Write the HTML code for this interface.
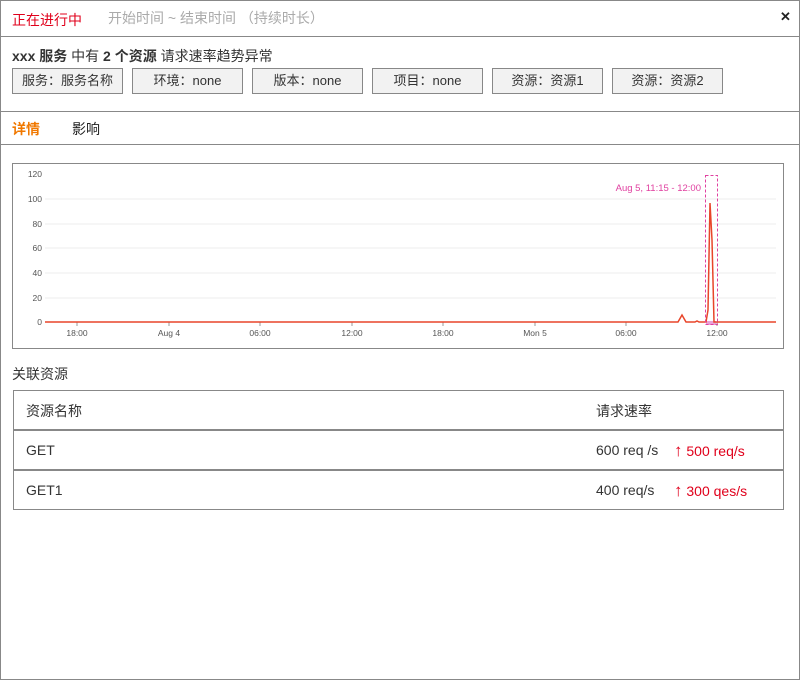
<!DOCTYPE html>
<html><head><meta charset="utf-8"><style>
*{margin:0;padding:0;box-sizing:border-box}
body{width:800px;height:680px;background:#fff;font-family:"Liberation Sans","Noto Sans CJK SC",sans-serif;font-size:14px;color:#333;position:relative;overflow:hidden}
.frame{position:absolute;left:0;top:0;width:800px;height:680px;border:1px solid #888}
.abs{position:absolute;white-space:nowrap}
.hl{position:absolute;left:0;width:800px;height:1px;background:#888}
.tag{position:absolute;top:68px;height:26px;width:111px;border:1px solid #888;background:#f2f2f2;text-align:center;line-height:24px;font-size:13px;color:#333}
.tbl{position:absolute;left:13px;top:390px;width:771px;height:120px;border:1px solid #888}
.sep{position:absolute;left:0;width:769px;height:2px;background:#888}
</style></head><body>
<div class="frame"></div>
<div class="abs" style="left:12px;top:10px;color:#e0001b;font-size:14px">正在进行中</div>
<div class="abs" style="left:108px;top:8px;color:#aaa;font-size:14px">开始时间 ~ 结束时间 （持续时长）</div>
<div class="abs" style="left:780px;top:9px;font-size:13px;font-weight:bold;color:#222">✕</div>
<div class="hl" style="top:36px"></div>
<div class="abs" style="left:12px;top:46px;font-size:14px;color:#333"><b>xxx 服务</b> 中有 <b>2 个资源</b> 请求速率趋势异常</div>
<div class="tag" style="left:12px">服务：服务名称</div>
<div class="tag" style="left:132px">环境：none</div>
<div class="tag" style="left:252px">版本：none</div>
<div class="tag" style="left:372px">项目：none</div>
<div class="tag" style="left:492px">资源：资源1</div>
<div class="tag" style="left:612px">资源：资源2</div>
<div class="hl" style="top:111px"></div>
<div class="abs" style="left:12px;top:119px;color:#f07800;font-weight:bold;font-size:14px">详情</div>
<div class="abs" style="left:72px;top:119px;color:#222;font-size:14px">影响</div>
<div class="hl" style="top:144px"></div>
<svg class="abs" style="left:12px;top:163px" width="772" height="186" viewBox="12 163 772 186">
<rect x="12.5" y="163.5" width="771" height="185" fill="#fff" stroke="#888"/>
<g stroke="#eee" stroke-width="1">
<line x1="45" y1="199" x2="776" y2="199"/><line x1="45" y1="224" x2="776" y2="224"/><line x1="45" y1="248" x2="776" y2="248"/><line x1="45" y1="273" x2="776" y2="273"/><line x1="45" y1="298" x2="776" y2="298"/>
</g>
<g font-family="Liberation Sans,sans-serif" font-size="8.5" fill="#555" text-anchor="end">
<text x="42" y="177">120</text><text x="42" y="202">100</text><text x="42" y="227">80</text><text x="42" y="251">60</text><text x="42" y="276">40</text><text x="42" y="301">20</text><text x="42" y="325">0</text>
</g>
<g stroke="#999"><line x1="77" y1="322" x2="77" y2="326"/><line x1="169" y1="322" x2="169" y2="326"/><line x1="260" y1="322" x2="260" y2="326"/><line x1="352" y1="322" x2="352" y2="326"/><line x1="443" y1="322" x2="443" y2="326"/><line x1="535" y1="322" x2="535" y2="326"/><line x1="626" y1="322" x2="626" y2="326"/><line x1="717" y1="322" x2="717" y2="326"/></g>
<g font-family="Liberation Sans,sans-serif" font-size="8.5" fill="#555" text-anchor="middle">
<text x="77" y="336">18:00</text><text x="169" y="336">Aug 4</text><text x="260" y="336">06:00</text><text x="352" y="336">12:00</text><text x="443" y="336">18:00</text><text x="535" y="336">Mon 5</text><text x="626" y="336">06:00</text><text x="717" y="336">12:00</text>
</g>
<rect x="706" y="321" width="10" height="4" fill="#e8a0d8"/>
<polyline fill="none" stroke="#e8452a" stroke-width="1.5" points="45,322 678,322 682,315 686,322 695,322 697,321 699,322 706,322 708,310 710,203 712,240 714,322 776,322"/>
<rect x="705.5" y="175.5" width="12" height="149" fill="none" stroke="#e040a0" stroke-dasharray="3,2"/>
<text x="701" y="191" text-anchor="end" font-family="Liberation Sans,sans-serif" font-size="9.5" fill="#e040a0">Aug 5, 11:15 - 12:00</text>
</svg>
<div class="abs" style="left:12px;top:364px;font-size:14px;color:#333">关联资源</div>
<div class="tbl">
<div class="abs" style="left:12px;top:10px">资源名称</div>
<div class="abs" style="left:582px;top:10px">请求速率</div>
<div class="sep" style="top:38px"></div>
<div class="abs" style="left:12px;top:51px">GET</div>
<div class="abs" style="left:582px;top:51px">600 req /s</div>
<div class="abs" style="left:660px;top:51px;color:#e0001b;line-height:17px"><span style="font-size:17px">↑</span> 500 req/s</div>
<div class="sep" style="top:78px"></div>
<div class="abs" style="left:12px;top:91px">GET1</div>
<div class="abs" style="left:582px;top:91px">400 req/s</div>
<div class="abs" style="left:660px;top:91px;color:#e0001b;line-height:17px"><span style="font-size:17px">↑</span> 300 qes/s</div>
</div>
</body></html>
